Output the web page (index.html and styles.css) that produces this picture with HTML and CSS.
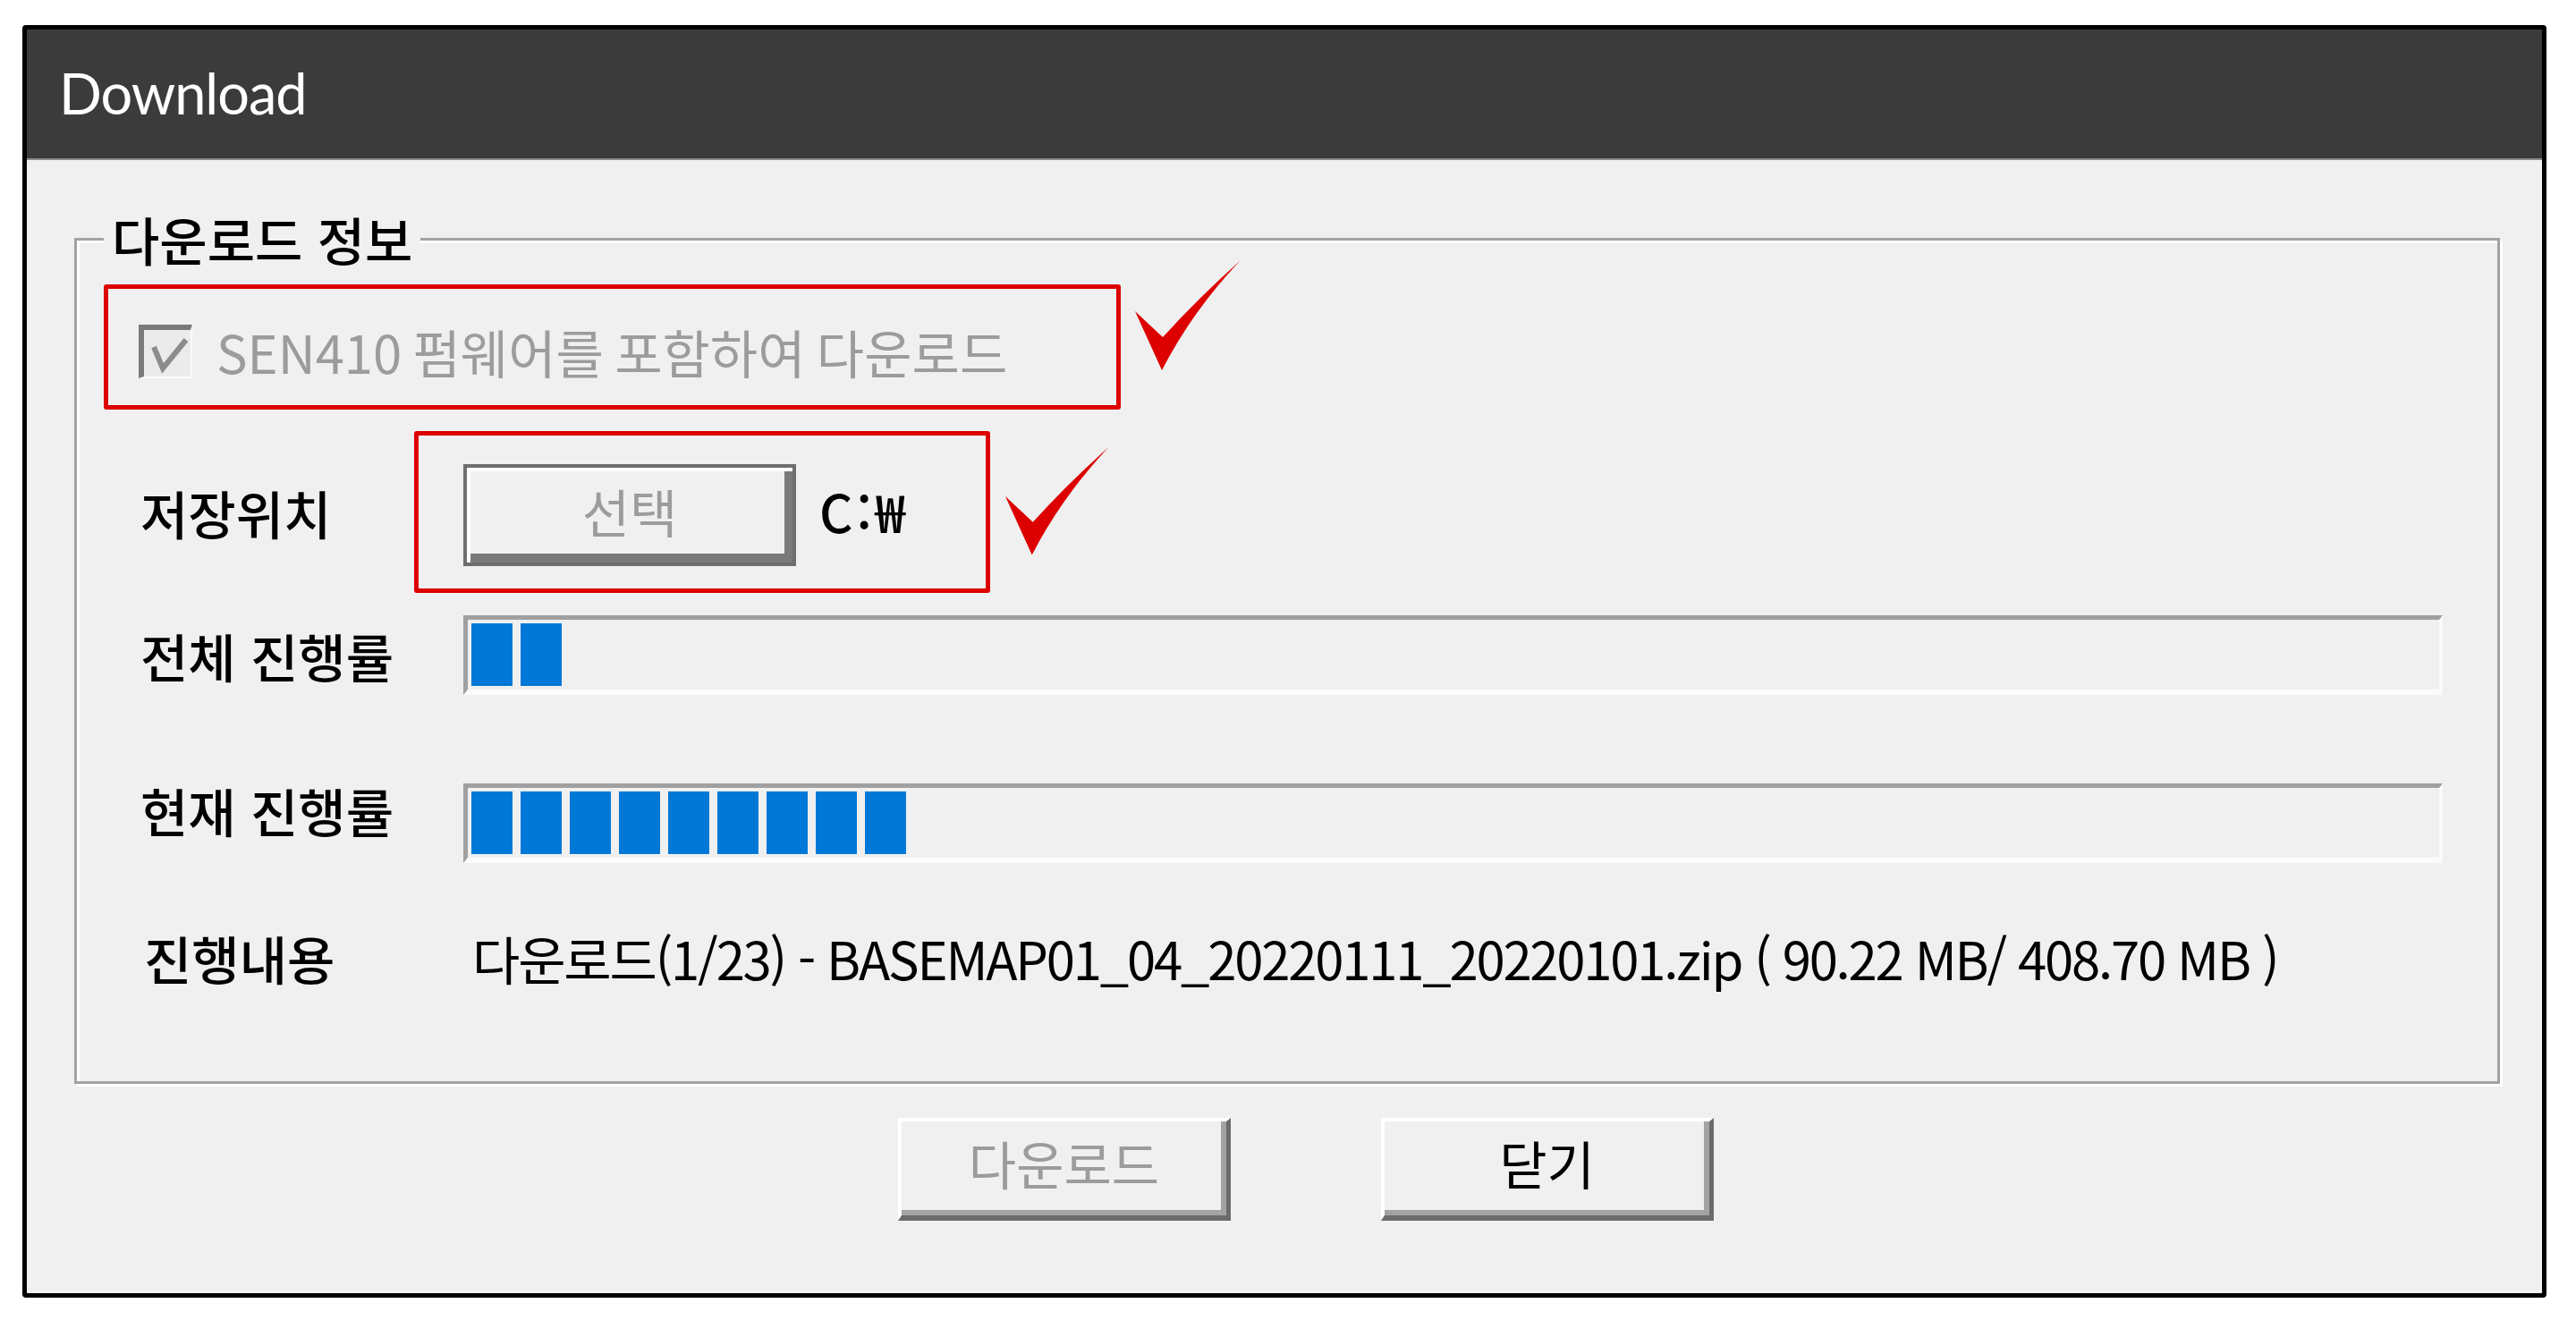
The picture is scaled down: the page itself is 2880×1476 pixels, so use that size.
FILE: index.html
```html
<!DOCTYPE html>
<html lang="ko">
<head>
<meta charset="utf-8">
<title>Download</title>
<link rel="stylesheet" href="styles.css">
</head>
<body>
<div class="window">
  <div class="titlebar"><span class="title">Download</span></div>
  <div class="client">
    <fieldset class="group">
      <legend class="group-legend">다운로드 정보</legend>

      <div class="row row-check">
        <div class="highlight highlight-check">
          <span class="checkbox">
            <svg class="checkbox-tick" viewBox="0 0 52 52" width="52" height="52"><polyline points="11,19 21,43 47,11" fill="none" stroke="#8c8c8c" stroke-width="6" stroke-linejoin="miter"/></svg>
          </span>
          <span class="check-label">SEN410 펌웨어를 포함하여 다운로드</span>
        </div>
        <svg class="mark mark-1" viewBox="0 0 117 122" width="117" height="122"><path d="M0,56 L31,85 Q72,40 117,0 Q64,56 30,122 Z" fill="#dc0000"/></svg>
      </div>

      <div class="row row-path">
        <span class="label label-path">저장위치</span>
        <div class="highlight highlight-path">
          <button class="btn btn-select" disabled>선택</button>
          <span class="path">C:₩</span>
        </div>
        <svg class="mark mark-2" viewBox="0 0 117 122" width="116" height="122"><path d="M0,56 L31,85 Q72,40 117,0 Q64,56 30,122 Z" fill="#dc0000"/></svg>
      </div>

      <div class="row row-progress row-total">
        <span class="label">전체 진행률</span>
        <div class="progress">
          <span class="block"></span><span class="block"></span>
        </div>
      </div>

      <div class="row row-progress row-current">
        <span class="label">현재 진행률</span>
        <div class="progress">
          <span class="block"></span><span class="block"></span><span class="block"></span>
          <span class="block"></span><span class="block"></span><span class="block"></span>
          <span class="block"></span><span class="block"></span><span class="block"></span>
        </div>
      </div>

      <div class="row row-status">
        <span class="label label-status">진행내용</span>
        <span class="status">다운로드(1/23) - BASEMAP01_04_20220111_20220101.zip ( 90.22 MB/ 408.70 MB )</span>
      </div>
    </fieldset>

    <div class="actions">
      <button class="btn btn-action" disabled>다운로드</button>
      <button class="btn btn-action">닫기</button>
    </div>
  </div>
</div>
</body>
</html>
```
FILE: styles.css
```css
html, body {
  margin: 0;
  padding: 0;
  background: #ffffff;
}

body {
  font-family: "Noto Sans CJK KR", "Noto Sans", sans-serif;
  color: #000;
}

.window {
  margin: 28px 0 0 25px;
  width: 2822px;
  height: 1423px;
  box-sizing: border-box;
  border: 5px solid #000;
  border-radius: 4px;
  background: #f0f0f0;
  display: flex;
  flex-direction: column;
  overflow: hidden;
}

.titlebar {
  height: 146px;
  flex: none;
  box-sizing: border-box;
  background: #3b3b3b;
  border-bottom: 2px solid #8c8c8c;
  display: flex;
  align-items: center;
  padding: 0 0 3px 36px;
}

.title {
  font-family: "Lato", "Open Sans", sans-serif;
  font-size: 63px;
  letter-spacing: -1px;
  color: #ffffff;
}

.client {
  flex: 1;
  display: flex;
  flex-direction: column;
}

/* group box */
.group {
  margin: 58px 0 0 53px;
  width: 2712px;
  box-sizing: border-box;
  border: 3px solid #a2a2a2;
  box-shadow: inset 3px 3px 0 #ffffff, 3px 3px 0 #ffffff;
  padding: 21px 0 108px 30px;
  min-inline-size: 0;
}

.group-legend {
  font-size: 58px;
  line-height: 60px;
  font-weight: 500;
  padding: 0 9px;
  background: #f0f0f0;
  color: #000;
}

.row {
  display: flex;
}

.label {
  flex: none;
  width: 402px;
  box-sizing: border-box;
  padding-left: 41px;
  font-size: 58px;
  line-height: 60px;
  font-weight: 500;
  white-space: nowrap;
}

/* red annotation frames */
.highlight {
  border: 5px solid #dc0000;
  border-radius: 3px;
  box-sizing: border-box;
  display: flex;
}

.mark {
  flex: none;
  display: block;
}

/* row 1 : checkbox */
.row-check {
  align-items: flex-start;
}

.highlight-check {
  width: 1137px;
  height: 140px;
  align-items: center;
  padding: 10px 0 0 34px;
}

.checkbox {
  flex: none;
  width: 60px;
  height: 60px;
  box-sizing: border-box;
  border-style: solid;
  border-width: 6px 2px 2px 6px;
  border-color: #7a7a7a #fbfbfb #fbfbfb #7a7a7a;
  background: #ebebeb;
  display: flex;
}

.checkbox-tick {
  display: block;
}

.check-label {
  margin-left: 27px;
  font-size: 58px;
  line-height: 60px;
  color: #9c9c9c;
  word-spacing: -4px;
  white-space: nowrap;
}

.mark-1 {
  margin: -26px 0 0 16px;
}

/* row 2 : save location */
.row-path {
  margin-top: 24px;
  align-items: center;
}

.label-path {
  width: 347px;
}

.highlight-path {
  width: 644px;
  height: 181px;
  align-items: flex-start;
  padding: 32px 0 0 50px;
}

.path {
  margin: 22px 0 0 26px;
  font-size: 58px;
  line-height: 60px;
  font-weight: 500;
  letter-spacing: 4px;
}

.mark-2 {
  align-self: flex-start;
  margin: 17px 0 0 17px;
}

/* buttons */
.btn {
  font-family: "Noto Sans CJK KR", "Noto Sans", sans-serif;
  font-size: 58px;
  line-height: 60px;
  margin: 0;
  padding: 0;
  background: #f0f0f0;
  box-sizing: border-box;
  color: #000;
  cursor: default;
}

.btn:disabled {
  color: #9c9c9c;
}

.btn-select {
  width: 372px;
  height: 114px;
  border: 4px solid #6e6e6e;
  box-shadow: inset 4px 4px 0 #ffffff, inset -9px -10px 0 #7a7a7a;
  padding-bottom: 10px;
}

.actions {
  display: flex;
  justify-content: center;
  gap: 168px;
  padding-left: 48px;
  margin-top: 38px;
}

.btn-action {
  width: 372px;
  height: 115px;
  border-style: solid;
  border-width: 4px 5px 6px 4px;
  border-color: #ffffff #6b6b6b #6b6b6b #ffffff;
  box-shadow: inset -6px -6px 0 #a3a3a3;
  padding-bottom: 14px;
}

/* progress bars */
.row-progress {
  align-items: center;
}

.row-total {
  margin-top: 25px;
}

.row-current {
  margin-top: 99px;
}

.row-current .label {
  margin-top: -30px;
}

.progress {
  width: 2213px;
  height: 89px;
  box-sizing: border-box;
  border-style: solid;
  border-width: 5px 4px 6px 5px;
  border-color: #a0a0a0 #fbfbfb #fbfbfb #a0a0a0;
  padding: 4px;
  display: flex;
  gap: 9px;
  background: #f0f0f0;
}

.block {
  width: 46px;
  height: 70px;
  background: #0078d7;
  flex: none;
}

/* status row */
.row-status {
  margin-top: 76px;
  align-items: center;
}

.label-status {
  padding-left: 45px;
}

.status {
  padding-left: 10px;
  font-size: 58px;
  line-height: 60px;
  letter-spacing: -2.2px;
  white-space: nowrap;
}
```
